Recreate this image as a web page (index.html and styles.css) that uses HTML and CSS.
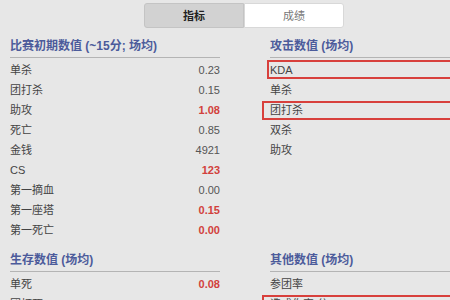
FILE: index.html
```html
<!DOCTYPE html>
<html lang="zh-CN">
<head>
  <meta charset="UTF-8">
  <title>数据统计</title>
  <link rel="stylesheet" href="styles.css">
</head>
<body>
  <div class="tabs">
    <div class="tab active">指标</div>
    <div class="tab">成绩</div>
  </div>

  <div class="columns">
    <div class="col">
      <div class="section">
        <h3>比赛初期数值 (~15分; 场均)</h3>
        <div class="row"><span>单杀</span><span class="val">0.23</span></div>
        <div class="row"><span>团打杀</span><span class="val">0.15</span></div>
        <div class="row"><span>助攻</span><span class="val hi">1.08</span></div>
        <div class="row"><span>死亡</span><span class="val">0.85</span></div>
        <div class="row"><span>金钱</span><span class="val">4921</span></div>
        <div class="row"><span>CS</span><span class="val hi">123</span></div>
        <div class="row"><span>第一摘血</span><span class="val">0.00</span></div>
        <div class="row"><span>第一座塔</span><span class="val hi">0.15</span></div>
        <div class="row"><span>第一死亡</span><span class="val hi">0.00</span></div>
      </div>
      <div class="section">
        <h3>生存数值 (场均)</h3>
        <div class="row"><span>单死</span><span class="val hi">0.08</span></div>
        <div class="row"><span>团打死</span><span class="val">0.00</span></div>
      </div>
    </div>

    <div class="col wide">
      <div class="section">
        <h3>攻击数值 (场均)</h3>
        <div class="row marked"><span>KDA</span></div>
        <div class="row"><span>单杀</span></div>
        <div class="row marked shifted"><span>团打杀</span></div>
        <div class="row"><span>双杀</span></div>
        <div class="row"><span>助攻</span></div>
      </div>
      <div class="section lower">
        <h3>其他数值 (场均)</h3>
        <div class="row"><span>参团率</span></div>
        <div class="row marked shifted"><span>造成伤害/分</span></div>
      </div>
    </div>
  </div>
</body>
</html>
```

FILE: styles.css
```css
html, body {
  margin: 0;
  height: 100%;
  overflow: hidden;
}
body {
  background-color: #e7e7e7;
  font-family: "Liberation Sans", "Noto Sans CJK SC", sans-serif;
  font-size: 11px;
  color: #444;
  padding: 3px 10px 0 10px;
}

/* tab switcher */
.tabs {
  display: flex;
  margin-left: 134px;
}
.tab {
  width: 100px;
  height: 25px;
  line-height: 25px;
  text-align: center;
  background-color: #fff;
  color: #777;
  border: 1px solid #d8d8d8;
  box-sizing: border-box;
  border-radius: 0 3px 3px 0;
}
.tab.active {
  background-color: #d2d2d2;
  color: #222;
  font-weight: bold;
  border-color: #c4c4c4;
  border-radius: 3px 0 0 3px;
}

/* stat columns */
.columns {
  display: flex;
  gap: 50px;
  margin-top: 10px;
}
.col {
  width: 210px;
  flex-shrink: 0;
}
.col.wide {
  width: 240px;
}
.section + .section {
  margin-top: 12px;
}
.section.lower {
  margin-top: 92px;
}
h3 {
  margin: 0 0 2px 0;
  font-size: 12px;
  line-height: 16px;
  color: #4c5b9b;
  padding-bottom: 3px;
  border-bottom: 1px solid #b4b4b4;
}
.row {
  display: flex;
  justify-content: space-between;
  height: 20px;
  line-height: 20px;
  position: relative;
}
.val {
  color: #555;
}
.val.hi {
  color: #d2413c;
  font-weight: bold;
}

/* highlight frames */
.marked::after {
  content: "";
  position: absolute;
  left: -3px;
  right: -40px;
  top: 0;
  height: 19px;
  border: 2px solid #d8403c;
  box-sizing: border-box;
}
.marked.shifted::after {
  left: -8px;
  top: 1px;
}
```
